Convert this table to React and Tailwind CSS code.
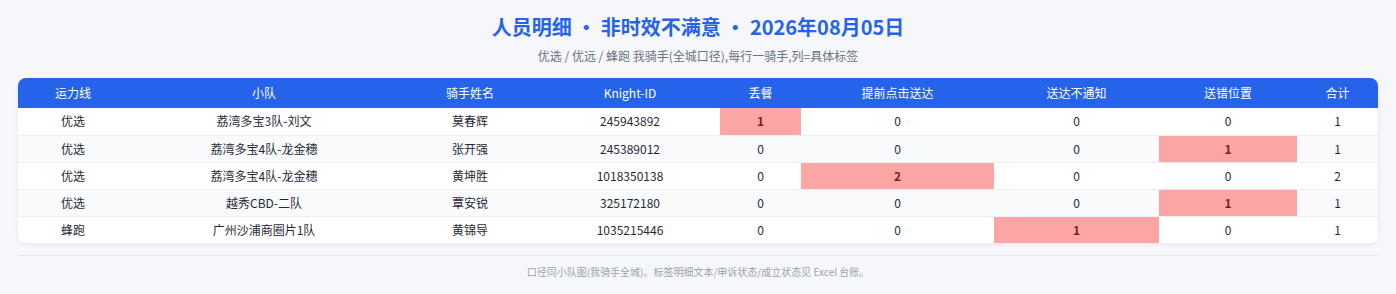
import React from 'react';

const rows = [
  { line: '优选', team: '荔湾多宝3队-刘文', name: '莫春辉', id: '245943892', v: [1, 0, 0, 0], total: 1 },
  { line: '优选', team: '荔湾多宝4队-龙金穗', name: '张开强', id: '245389012', v: [0, 0, 0, 1], total: 1 },
  { line: '优选', team: '荔湾多宝4队-龙金穗', name: '黄坤胜', id: '1018350138', v: [0, 2, 0, 0], total: 2 },
  { line: '优选', team: '越秀CBD-二队', name: '覃安锐', id: '325172180', v: [0, 0, 0, 1], total: 1 },
  { line: '蜂跑', team: '广州沙浦商圈片1队', name: '黄锦导', id: '1035215446', v: [0, 0, 1, 0], total: 1 },
];

const headers = ['运力线', '小队', '骑手姓名', 'Knight-ID', '丢餐', '提前点击送达', '送达不通知', '送错位置', '合计'];

export default function App() {
  return (
    <div className="min-h-screen w-full bg-[#f5f7fb] px-[18px] pt-[13px] font-['Noto_Sans_CJK_SC','Noto_Sans',sans-serif]">
      {/* 标题 */}
      <div className="text-center">
        <h1 className="text-[20px] leading-[28px] font-bold text-[#2563eb]">
          人员明细 · 非时效不满意 · 2026年08月05日
        </h1>
        <p className="mt-[6px] text-[12px] leading-[18px] text-[#6b7280]">
          优选 / 优远 / 蜂跑 我骑手(全城口径),每行一骑手,列=具体标签
        </p>
      </div>

      {/* 表格 */}
      <div className="mt-[13px] rounded-[8px] bg-white shadow-[0_1px_4px_rgba(15,23,42,0.08)] overflow-hidden">
        <table className="w-full table-fixed border-collapse text-[12px]">
          <colgroup>
            <col className="w-[110px]" />
            <col className="w-[272px]" />
            <col className="w-[140px]" />
            <col className="w-[180px]" />
            <col className="w-[81px]" />
            <col className="w-[193px]" />
            <col className="w-[165px]" />
            <col className="w-[138px]" />
            <col className="w-[81px]" />
          </colgroup>
          <thead>
            <tr className="bg-[#2563eb] text-white h-[30px]">
              {headers.map((h) => (
                <th key={h} className="font-normal text-center">{h}</th>
              ))}
            </tr>
          </thead>
          <tbody className="text-[#1f2937]">
            {rows.map((r, i) => (
              <tr key={i} className={`h-[27px] ${i % 2 === 1 ? 'bg-[#f8fafc]' : 'bg-white'} ${i < rows.length - 1 ? 'border-b border-[#eceef2]' : ''}`}>
                <td className="text-center">{r.line}</td>
                <td className="text-center">{r.team}</td>
                <td className="text-center">{r.name}</td>
                <td className="text-center">{r.id}</td>
                {r.v.map((n, j) => (
                  <td key={j} className={n > 0 ? 'text-center bg-[#fca5a5] text-[#7f1d1d] font-bold' : 'text-center'}>
                    {n}
                  </td>
                ))}
                <td className="text-center">{r.total}</td>
              </tr>
            ))}
          </tbody>
        </table>
      </div>

      {/* 页脚 */}
      <div className="mt-[12px] border-t border-[#e5e7eb] pt-[9px] text-center text-[10px] leading-[14px] text-[#9ca3af]">
        口径同小队图(我骑手全城)。标签明细文本/申诉状态/成立状态见 Excel 台账。
      </div>
    </div>
  );
}
